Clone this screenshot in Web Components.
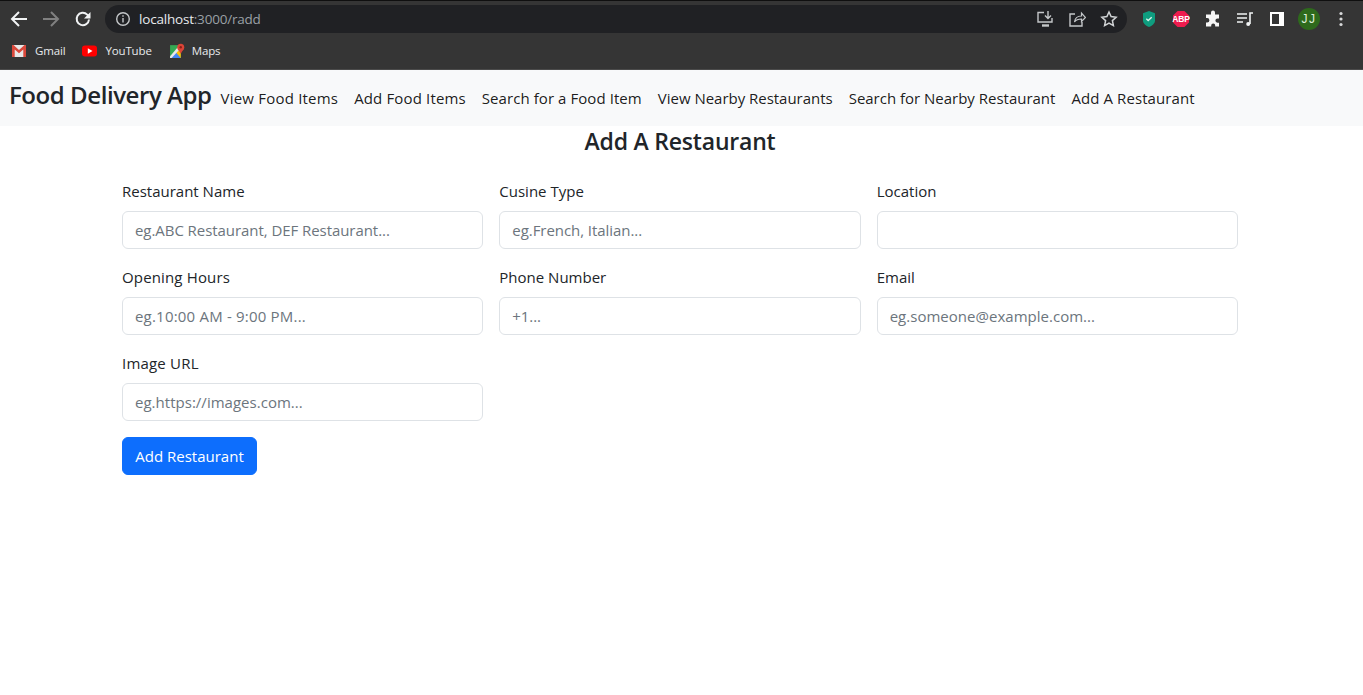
<!DOCTYPE html>
<html lang="en">
<head>
<meta charset="utf-8">
<title>Food Delivery App</title>
<style>
  html, body { margin: 0; height: 100%; background: #fff; }
  body { font-family: "Open Sans", "Liberation Sans", sans-serif; color: #212529; overflow: hidden; }
</style>
</head>
<body>

<browser-bar></browser-bar>
<app-nav>
  <a slot="brand">Food Delivery App</a>
  <nav-link style="letter-spacing:.2px">View Food Items</nav-link>
  <nav-link style="letter-spacing:.15px">Add Food Items</nav-link>
  <nav-link style="letter-spacing:.07px">Search for a Food Item</nav-link>
  <nav-link style="letter-spacing:-.02px">View Nearby Restaurants</nav-link>
  <nav-link style="letter-spacing:-.01px">Search for Nearby Restaurant</nav-link>
  <nav-link style="letter-spacing:.09px">Add A Restaurant</nav-link>
</app-nav>
<restaurant-form heading="Add A Restaurant">
  <form-field label="Restaurant Name" placeholder="eg.ABC Restaurant, DEF Restaurant..."></form-field>
  <form-field label="Cusine Type" placeholder="eg.French, Italian..."></form-field>
  <form-field label="Location"></form-field>
  <form-field label="Opening Hours" placeholder="eg.10:00 AM - 9:00 PM..." style="--ph-spacing:.2px;--label-spacing:.15px"></form-field>
  <form-field label="Phone Number" placeholder="+1..."></form-field>
  <form-field label="Email" placeholder="eg.someone@example.com..." style="--ph-spacing:.02px"></form-field>
  <form-field label="Image URL" placeholder="eg.https://images.com..." style="--ph-spacing:.02px;--label-spacing:.2px"></form-field>
</restaurant-form>

<script>
class BrowserBar extends HTMLElement {
    constructor() {
        super();
        this.shadow = this.attachShadow({mode: 'open'});
        this.render();
    }

    render() {
        this.shadow.innerHTML =
        /*html*/
        `
        <style>
            :host{
                display:block;
                height:70px;
                background:#353535;
                border-top:1px solid #0f0f0f;
                border-bottom:1px solid #4b4b4b;
                box-sizing:border-box;
                font-family:"Open Sans","Liberation Sans",sans-serif;
            }
            svg{display:block;flex:none;}
            .top{
                height:36px;
                display:flex;
                align-items:center;
                padding:0 0 0 9px;
            }
            .btn{width:20px;height:20px;margin-right:12px;}
            .omni{
                width:1022px;
                height:28px;
                border-radius:14px;
                background:#202124;
                display:flex;
                align-items:center;
                padding:0 9px 0 10px;
                box-sizing:border-box;
                font-size:13.5px;
                letter-spacing:-.2px;
                color:#9aa0a6;
            }
            .omni b{font-weight:400;color:#e8eaed;}
            .url{margin-left:8px;flex:1;}
            .omni-icons{display:flex;gap:14px;}
            .ext{
                display:grid;
                grid-auto-flow:column;
                grid-auto-columns:32px;
                justify-items:center;
                align-items:center;
                margin-left:6px;
            }
            .avatar{
                width:22px;height:22px;border-radius:50%;
                background:#2e6a1c;color:#dfeeda;
                display:flex;align-items:center;justify-content:center;
                font-family:"Liberation Sans",sans-serif;
                font-size:12px;letter-spacing:1.5px;
            }
            .marks{
                height:31px;
                display:flex;
                align-items:center;
                padding:0 0 4px 11px;
                box-sizing:border-box;
                font-size:11.5px;
                letter-spacing:-.15px;
                color:#e8eaed;
            }
            .mark{display:flex;align-items:center;gap:8px;margin-right:17px;}
        </style>

        <div class="top">
            <svg class="btn" viewBox="0 0 20 20" fill="none" stroke="#f1f3f4" stroke-width="2"><path d="M18 10H3.500M10 3 3 10l7 7"/></svg>
            <svg class="btn" viewBox="0 0 20 20" fill="none" stroke="#808080" stroke-width="2"><path d="M2 10h14.500M10 3l7 7-7 7"/></svg>
            <svg class="btn" viewBox="0 0 20 20" fill="none" stroke="#f1f3f4" stroke-width="2"><path d="M16 10.500a6.200 6.200 0 1 1-1.800-4.900L16.500 8"/><path fill="#f1f3f4" stroke="none" d="M17.500 3v6.500H11z"/></svg>
            <div class="omni">
                <svg width="16" height="16" viewBox="0 0 16 16" fill="none" stroke="#c4c7c9" stroke-width="1.400"><circle cx="8" cy="8" r="6.300"/><path d="M8 7v4.500M8 4.200v1.500"/></svg>
                <span class="url"><b>localhost</b>:3000/radd</span>
                <div class="omni-icons">
                    <svg width="18" height="18" viewBox="0 0 18 18" fill="none" stroke="#c4c7c9" stroke-width="1.400"><path d="M8 2.500H2v9.500h14V8"/><path d="M12 1v7M9 5.500l3 3 3-3"/><path d="M6 15.500h7" stroke-width="2.400"/></svg>
                    <svg width="18" height="18" viewBox="0 0 18 18" fill="none" stroke="#c4c7c9" stroke-width="1.400"><path d="M7 4H2v12h12v-4"/><path d="M6.500 12c.5-4 3-6 7-6V3l4 4.500-4 4V9c-3 0-5.500.8-7 3z" stroke-width="1.200"/></svg>
                    <svg width="18" height="18" viewBox="0 0 18 18" fill="none" stroke="#d0d3d5" stroke-width="1.500"><path d="m9 2 2.100 4.600 5 .6-3.700 3.400 1 5L9 13.100l-4.400 2.500 1-5L1.900 7.200l5-.6z"/></svg>
                </div>
            </div>
            <div class="ext">
                <svg width="16" height="18" viewBox="0 0 16 18"><path fill="#0f9d7f" d="M8 1l6 2.200v7.300c0 3-3 5.400-6 6.500-3-1.100-6-3.500-6-6.500V3.200z"/><path fill="none" stroke="#d8f2ea" stroke-width="1.400" d="M5.300 8.800 7.200 10.500l3.500-3.300"/></svg>
                <svg width="18" height="18" viewBox="0 0 18 18"><path fill="#ee1c4e" d="M5.600 1h6.800L17 5.600v6.800L12.400 17H5.600L1 12.400V5.600z"/><text x="9" y="11.800" text-anchor="middle" font-size="8.500" font-weight="700" letter-spacing="-.2" fill="#fff" font-family="Liberation Sans">ABP</text></svg>
                <svg width="18" height="18" viewBox="0 0 18 18"><path fill="#f6f6f6" d="M7 2.500a2 2 0 0 1 4 0V4.500h4v4h-1.500a2.100 2.100 0 0 0 0 4.200H15v3.800h-3.800v-1a2 2 0 0 0-4 0v1H2v-4h1.200a2.200 2.200 0 0 0 0-4.400H2V4.500h5z"/></svg>
                <svg width="18" height="18" viewBox="0 0 18 18" fill="none" stroke="#f1f3f4" stroke-width="1.600"><path d="M1 4h10M1 8h10M1 12h6"/><path d="M14 14V3h3"/><circle cx="12.200" cy="14" r="2" fill="#f1f3f4" stroke="none"/></svg>
                <svg width="18" height="18" viewBox="0 0 18 18"><path fill="#fff" fill-rule="evenodd" d="M2 2h14v14H2zM4 4v10h7V4z"/></svg>
                <div class="avatar">JJ</div>
                <svg width="6" height="16" viewBox="0 0 6 16" fill="#d8d9da"><circle cx="3" cy="2.500" r="1.600"/><circle cx="3" cy="8" r="1.600"/><circle cx="3" cy="13.500" r="1.600"/></svg>
            </div>
        </div>
        <div class="marks">
            <span class="mark">
                <svg width="16" height="14" viewBox="0 0 16 14"><path fill="#e8e8e8" d="M1 1h14v12H1z"/><path fill="#d9483b" d="M1 1h1.500L8 6l5.500-5H15v12h-2.700V5.500L8 9.300 3.700 5.500V13H1z"/></svg>
                Gmail
            </span>
            <span class="mark">
                <svg width="15" height="12" viewBox="0 0 15 12"><rect width="15" height="11" y=".5" rx="3" fill="#f00"/><path fill="#fff" d="M5.800 3.300v5.400L10.500 6z"/></svg>
                YouTube
            </span>
            <span class="mark" style="gap:7px">
                <svg width="16" height="16" viewBox="0 0 15 15"><path fill="#34a853" d="M1 2h10v12H1z"/><path fill="#fbbc04" d="M1 14 11 5v9z"/><path fill="#4285f4" d="M1 14h10L6.500 9z"/><path fill="#e8e8e8" d="M1 12.500 9 3h2v2L2.500 14H1z"/><circle cx="11" cy="4" r="3.300" fill="#db4437"/><path fill="#db4437" d="M8.200 5.500 11 10l2.800-4.500z"/><circle cx="11" cy="4" r="1.100" fill="#8a2018"/></svg>
                Maps
            </span>
        </div>
        `;
    }
}

class AppNav extends HTMLElement {
    constructor() {
        super();
        this.shadow = this.attachShadow({mode: 'open'});
        this.render();
    }

    render() {
        this.shadow.innerHTML =
        /*html*/
        `
        <style>
            :host{
                display:flex;
                align-items:center;
                height:56px;
                background:#f8f9fa;
                padding:0 0 0 9px;
                box-sizing:border-box;
            }
            ::slotted([slot=brand]){
                font-size:24px;
                font-weight:600;
                letter-spacing:-.43px;
                color:#212529;
                padding-bottom:8px;
            }
            .links{display:flex;margin-left:1px;}
        </style>
        <slot name="brand"></slot>
        <div class="links"><slot></slot></div>
        `;
    }
}

class NavLink extends HTMLElement {
    constructor() {
        super();
        this.shadow = this.attachShadow({mode: 'open'});
        this.shadow.innerHTML =
        /*html*/
        `
        <style>
            :host{
                display:block;
                padding:0 8px;
                font-size:15px;
                line-height:24px;
                color:rgba(0,0,0,.9);
                white-space:nowrap;
            }
        </style>
        <slot></slot>
        `;
    }
}

class RestaurantForm extends HTMLElement {
    constructor() {
        super();
        this.shadow = this.attachShadow({mode: 'open'});
        this.render();
    }

    render() {
        this.shadow.innerHTML =
        /*html*/
        `
        <style>
            :host{
                display:block;
                padding:0 125px 0 122px;
            }
            h3{
                margin:0;
                text-align:center;
                font-size:23px;
                font-weight:600;
                letter-spacing:-.2px;
                line-height:31px;
                color:#212529;
            }
            .grid{
                display:grid;
                grid-template-columns:repeat(3,1fr);
                gap:16px;
                margin-top:22px;
            }
            button{
                display:block;
                margin-top:16px;
                width:135px;
                height:38px;
                border:1px solid #0d6efd;
                border-radius:6px;
                background:#0d6efd;
                color:#fff;
                font:inherit;
                font-size:15px;
                letter-spacing:0;
                padding:0;
            }
        </style>
        <h3></h3>
        <div class="grid"><slot></slot></div>
        <button type="button">Add Restaurant</button>
        `;
        this.shadow.querySelector('h3').textContent = this.getAttribute('heading');
    }
}

class FormField extends HTMLElement {
    constructor() {
        super();
        this.shadow = this.attachShadow({mode: 'open'});
        this.render();
    }

    render() {
        this.shadow.innerHTML =
        /*html*/
        `
        <style>
            :host{display:block;}
            label{
                display:block;
                height:24px;
                line-height:24px;
                margin-bottom:8px;
                font-size:15px;
                letter-spacing:var(--label-spacing,0);
                color:#212529;
            }
            input{
                display:block;
                width:100%;
                height:38px;
                box-sizing:border-box;
                padding:0 12px;
                border:1px solid #dee2e6;
                border-radius:6px;
                background:#fff;
                font:inherit;
                font-size:15px;
                letter-spacing:var(--ph-spacing,-.06px);
                color:#212529;
                outline:none;
            }
            input::placeholder{color:#6c757d;opacity:1;}
        </style>
        <label></label>
        <input type="text">
        `;
        this.shadow.querySelector('label').textContent = this.getAttribute('label');
        this.shadow.querySelector('input').placeholder = this.getAttribute('placeholder') || '';
    }
}

customElements.define('browser-bar', BrowserBar);
customElements.define('app-nav', AppNav);
customElements.define('nav-link', NavLink);
customElements.define('restaurant-form', RestaurantForm);
customElements.define('form-field', FormField);
</script>
</body>
</html>
